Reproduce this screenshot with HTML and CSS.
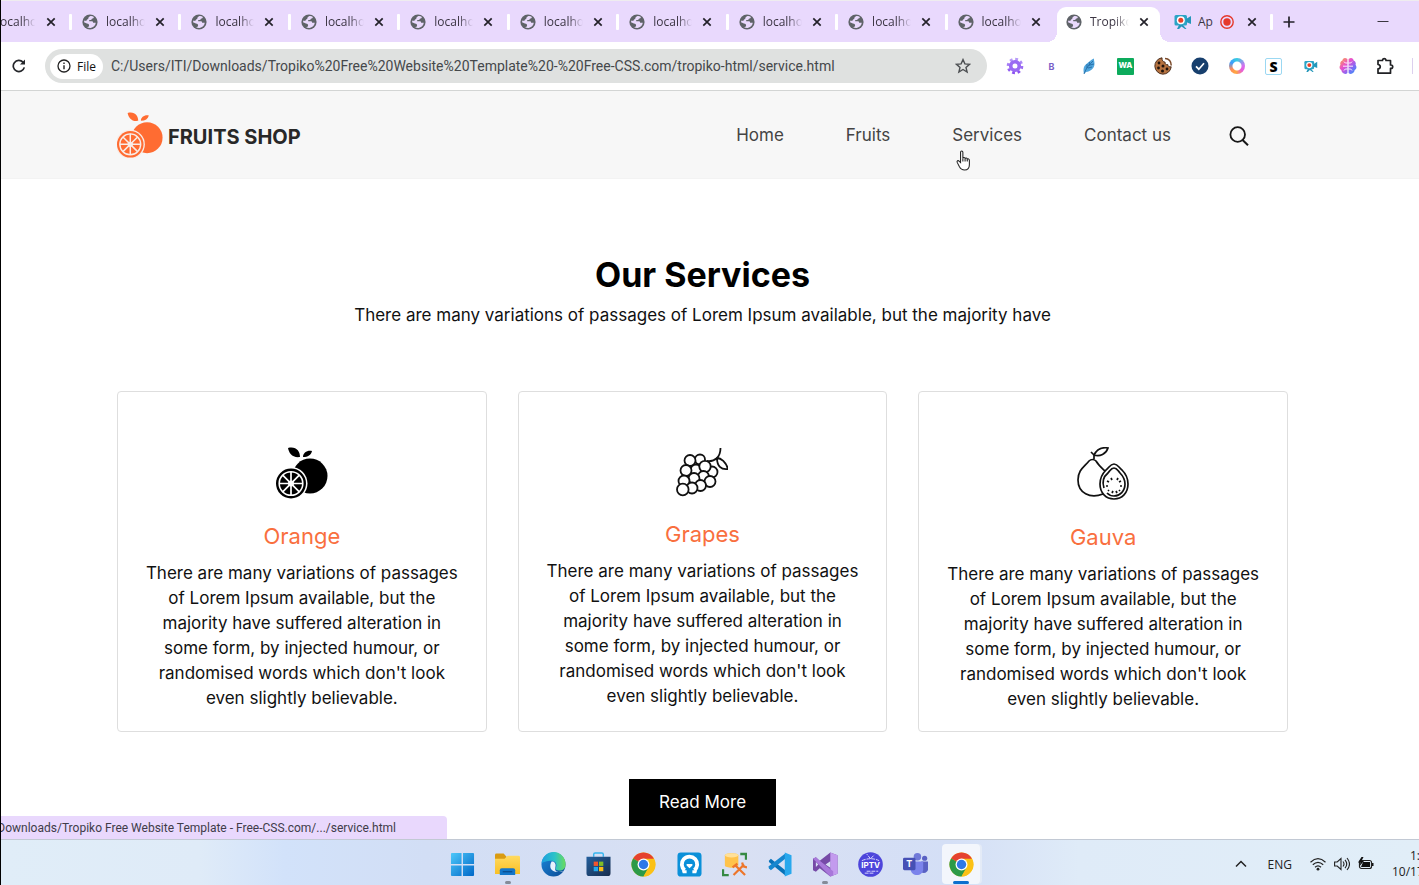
FILE: index.html
```
<!DOCTYPE html>
<html lang="en">
<head>
<meta charset="utf-8">
<title>Tropiko</title>
<link rel="stylesheet" href="styles.css">
</head>
<body>
<svg class="sprite" aria-hidden="true">
  <defs>
    <linearGradient id="g-win" x1="0" y1="0" x2="1" y2="1"><stop offset="0" stop-color="#4cc8fa"/><stop offset="1" stop-color="#0067c8"/></linearGradient>
    <linearGradient id="g-folder" x1="0" y1="0" x2="0" y2="1"><stop offset="0" stop-color="#ffda60"/><stop offset="1" stop-color="#f9bf24"/></linearGradient>
    <linearGradient id="g-edge" x1="0" y1="0" x2="1" y2="0"><stop offset="0" stop-color="#1d9ee0"/><stop offset=".55" stop-color="#2bc3c8"/><stop offset="1" stop-color="#6bdc5a"/></linearGradient>
    <linearGradient id="g-edge2" x1="0" y1="0" x2="1" y2="1"><stop offset="0" stop-color="#1b88dc"/><stop offset="1" stop-color="#0c4a93"/></linearGradient>
    <linearGradient id="g-store" x1="0" y1="0" x2="1" y2="1"><stop offset="0" stop-color="#235f9d"/><stop offset="1" stop-color="#182c4c"/></linearGradient>
    <linearGradient id="g-gear" x1="0" y1="0" x2="0" y2="1"><stop offset="0" stop-color="#b79af8"/><stop offset="1" stop-color="#8a4ff0"/></linearGradient>
    <linearGradient id="g-brain" x1="0" y1="0" x2="1" y2="1"><stop offset="0" stop-color="#ffab3d"/><stop offset=".4" stop-color="#e84fd0"/><stop offset=".7" stop-color="#7d6bf6"/><stop offset="1" stop-color="#2f9df5"/></linearGradient>
    <symbol id="globe" viewBox="0 0 16 16"><circle cx="8" cy="8" r="7.600" fill="#5f6368"/><path d="M8 2.200c1.500-.3 3 .1 3.900.9-.2 1-.9 1.500-2 1.600-.3 1-.9 1.400-2 1.400-.8 0-1 .6-.6 1.200h2.500c1 0 1.300.7 1.300 1.500h2.700c-.4 2.800-2.400 4.800-5.200 5.100-1.500.1-2.700-.2-3.700-.9 1.200-.2 2.200-.4 2.200-1.300 0-1.600-.7-2.200-2.200-2.300L2 8.200c.1-.6.200-1.200.5-1.700l1.800.4c.2-1.300.9-1.700 1.900-2C6.300 3.500 6.900 2.700 8 2.200z" fill="#e9d9fc"/></symbol>
    <symbol id="close" viewBox="0 0 10 10"><path d="M1.300 1.300l7.400 7.400M8.700 1.300L1.300 8.700" stroke="#24222a" stroke-width="1.700"/></symbol>
    <symbol id="recorder" viewBox="0 0 18 16"><rect x=".5" y="1" width="12.500" height="10.500" rx="1.500" fill="#2ba4c6"/><path d="M12 5l5-3v8l-5-2zM5 11h4l3.500 4h-1.500L7.500 12.500 5 15H3z" fill="#2497ba"/><circle cx="6.800" cy="6.200" r="4" fill="#fff"/><circle cx="6.800" cy="6.200" r="2.500" fill="#ea3f26"/></symbol>
    <symbol id="orange" viewBox="0 0 52 52"><path d="M24 10C16 11 13 6 12 1c8-2 12 3 12 9zM27 10c0-4 4-7 9-6-1 4-4 6-9 6z" fill="currentColor"/><circle cx="34" cy="29" r="17.500" fill="currentColor"/><circle cx="15" cy="36.500" r="16.500" fill="var(--gap)"/><circle cx="15" cy="36.500" r="15" fill="currentColor"/><circle cx="15" cy="36.500" r="11.800" fill="none" stroke="var(--gap)" stroke-width="1.600"/><path d="M15 24.700v23.600M3.200 36.500h23.600M6.700 28.200l16.600 16.600M23.300 28.200L6.700 44.800" stroke="var(--gap)" stroke-width="1.700"/><circle cx="15" cy="36.500" r="3" fill="var(--gap)"/></symbol>
    <symbol id="chrome" viewBox="0 0 26 26"><circle cx="13" cy="13" r="12.500" fill="#fbc116"/><path d="M13 13L2.200 6.700A12.500 12.500 0 0 1 23.800 6.700z" fill="#e5412f"/><path d="M2.200 6.700A12.500 12.500 0 0 0 13 25.500l5.400-9.400L13 13z" fill="#2c9a48"/><path d="M13 25.500A12.500 12.500 0 0 0 23.800 7H13v6l5.300 3z" fill="#fbc116"/><circle cx="13" cy="13" r="6.200" fill="#fff"/><circle cx="13" cy="13" r="4.900" fill="#2f78e8"/></symbol>
  </defs>
</svg>

<div class="screen">
  <header class="tabstrip">
    <div class="tab tab-cut"><span class="tab-title">ocalho</span><button class="x" aria-label="Close tab"><svg><use href="#close"/></svg></button></div>
    <div class="tab-group">
      <div class="tab"><svg class="fav"><use href="#globe"/></svg><span class="tab-title">localho</span><button class="x" aria-label="Close tab"><svg><use href="#close"/></svg></button></div>
      <div class="tab"><svg class="fav"><use href="#globe"/></svg><span class="tab-title">localho</span><button class="x" aria-label="Close tab"><svg><use href="#close"/></svg></button></div>
      <div class="tab"><svg class="fav"><use href="#globe"/></svg><span class="tab-title">localho</span><button class="x" aria-label="Close tab"><svg><use href="#close"/></svg></button></div>
      <div class="tab"><svg class="fav"><use href="#globe"/></svg><span class="tab-title">localho</span><button class="x" aria-label="Close tab"><svg><use href="#close"/></svg></button></div>
      <div class="tab"><svg class="fav"><use href="#globe"/></svg><span class="tab-title">localho</span><button class="x" aria-label="Close tab"><svg><use href="#close"/></svg></button></div>
      <div class="tab"><svg class="fav"><use href="#globe"/></svg><span class="tab-title">localho</span><button class="x" aria-label="Close tab"><svg><use href="#close"/></svg></button></div>
      <div class="tab"><svg class="fav"><use href="#globe"/></svg><span class="tab-title">localho</span><button class="x" aria-label="Close tab"><svg><use href="#close"/></svg></button></div>
      <div class="tab"><svg class="fav"><use href="#globe"/></svg><span class="tab-title">localho</span><button class="x" aria-label="Close tab"><svg><use href="#close"/></svg></button></div>
      <div class="tab tab-last"><svg class="fav"><use href="#globe"/></svg><span class="tab-title">localho</span><button class="x" aria-label="Close tab"><svg><use href="#close"/></svg></button></div>
    </div>
    <div class="tab tab-active"><svg class="fav"><use href="#globe"/></svg><span class="tab-title">Tropiko</span><button class="x" aria-label="Close tab"><svg><use href="#close"/></svg></button></div>
    <div class="tab tab-rec"><svg class="fav fav-rec"><use href="#recorder"/></svg><span class="tab-title">Ap</span><svg class="rec" viewBox="0 0 14 14"><circle cx="7" cy="7" r="6.200" fill="none" stroke="#e5392b" stroke-width="1.400"/><circle cx="7" cy="7" r="3.700" fill="#e5392b"/></svg><button class="x" aria-label="Close tab"><svg><use href="#close"/></svg></button></div>
    <button class="newtab" aria-label="New tab"><svg viewBox="0 0 12 12"><path d="M6 .5v11M.5 6h11" stroke="#24222a" stroke-width="1.700"/></svg></button>
    <button class="minimise" aria-label="Minimise"><svg viewBox="0 0 12 12"><path d="M.5 5.500h11" stroke="#3a3640"/></svg></button>
  </header>

  <div class="toolbar">
    <button class="reload" aria-label="Reload"><svg viewBox="0 0 14 14"><path d="M12.300 8.400A5.600 5.600 0 1 1 11 3.200l1.200 1.200" fill="none" stroke="#24262a" stroke-width="1.700"/><path d="M13 .6v5H8z" fill="#24262a"/></svg></button>
    <div class="omnibox">
      <button class="chip"><svg viewBox="0 0 14 14"><circle cx="7" cy="7" r="6" fill="none" stroke="#222" stroke-width="1.300"/><path d="M7 6.200v4M7 3.600v1.500" stroke="#222" stroke-width="1.400"/></svg>File</button>
      <input class="url" aria-label="Address" value="C:/Users/ITI/Downloads/Tropiko%20Free%20Website%20Template%20-%20Free-CSS.com/tropiko-html/service.html">
      <button class="star" aria-label="Bookmark"><svg viewBox="0 0 16 16"><path d="M8 1.600l1.900 4.300 4.600.4-3.500 3.100 1.100 4.600L8 11.500 3.900 14 5 9.400 1.500 6.300l4.600-.4z" fill="none" stroke="#4c4f52" stroke-width="1.400"/></svg></button>
    </div>
    <div class="extensions">
      <svg viewBox="0 0 18 18"><circle cx="9" cy="9" r="6.800" fill="none" stroke="url(#g-gear)" stroke-width="3" stroke-dasharray="2.700 2.640"/><circle cx="9" cy="9" r="4.300" fill="none" stroke="#9a6bf3" stroke-width="3.600"/></svg>
      <span class="ext-b">B</span>
      <svg viewBox="0 0 18 18"><path d="M4 17c-1-5-.5-8 3-10.500C9.500 4.500 11 2.500 14 1.500c-.3 2 .9 3.500.4 6.500-.8 4-4 6.500-8.400 7z" fill="#4fa5dc"/><path d="M4 17C6 11 9 8 13 4M7 11V7M9 9l.5-4M8 11l4-1M10 8l4-1" stroke="#1f659f" stroke-width=".8" fill="none"/></svg>
      <span class="ext-wa">WA</span>
      <svg viewBox="0 0 18 18"><path d="M8 .8a8.200 8.200 0 1 0 9.200 9c-2 .4-3.300-.5-3.400-2.200-2 .3-3-.7-2.700-2.400C9 5 7.800 3.200 8 .8z" fill="#b5723f" stroke="#4b2d1c"/><path d="M11 1.500c4 0 6.300 3 6.200 7" fill="none" stroke="#7b4a2a" stroke-width="1.500"/><g fill="#20130d"><circle cx="5" cy="6" r="1.400"/><circle cx="4.500" cy="11" r="1.400"/><circle cx="9" cy="9" r="1.500"/><circle cx="8.500" cy="14" r="1.500"/><circle cx="13" cy="12" r="1.400"/></g></svg>
      <svg viewBox="0 0 18 18"><circle cx="9" cy="9" r="8.500" fill="#173f6d"/><path d="M5 9.300l2.800 2.900L13 6.300" fill="none" stroke="#fff" stroke-width="1.700"/></svg>
      <span class="ext-ring"></span>
      <span class="ext-s">S</span>
      <svg class="ext-rec"><use href="#recorder"/></svg>
      <svg viewBox="0 0 18 18"><path d="M8.400 2C6 0 3.600 1.300 3.400 3.400 1.300 4.300.8 6.300 1.500 7.800-.2 10 .6 12.300 2.300 13.100 2.500 16.500 6.500 18 8.400 16zM9.600 2c2.400-2 4.800-.7 5 1.400 2.100.9 2.600 2.900 1.900 4.400 1.700 2.200.9 4.500-.8 5.300-.2 3.400-4.200 4.900-6.100 2.900z" fill="url(#g-brain)"/><path d="M8.500 6H6.300L5 4.600M8.500 9.200H4M8.500 12H6.300L5 13.500M9.500 6h2.200L13 4.600M9.500 9.200H14M9.500 12h2.200l1.300 1.500" stroke="#fff" stroke-width=".9" fill="none"/></svg>
      <svg viewBox="0 0 18 18"><path d="M2 3.500h4.500V3a1.800 1.800 0 0 1 3.500 0v.5h4.500V8h.5a1.700 1.700 0 0 1 0 3.400h-.5v4.800H2v-4.300c3-.4 3-4 0-4.400z" fill="none" stroke="#202124" stroke-width="1.700" stroke-linejoin="round"/></svg>
      <span class="divider"></span>
    </div>
  </div>

  <div class="page">
    <div class="site-header">
      <a class="brand" href="#"><svg><use href="#orange"/></svg><span>FRUITS SHOP</span></a>
      <nav class="nav"><a href="#">Home</a><a href="#">Fruits</a><a href="#" class="hovered">Services<svg class="cursor" viewBox="0 0 14 20"><path d="M4.200 12V2.200c0-1.700 2.200-1.700 2.200 0V8c.3-1.200 2-1 2.100.3.400-1 2-.8 2.100.5.600-.8 2-.4 2 .9V14c0 3-1.600 5-4.600 5-2.700 0-3.900-1.300-5-3.300L1 11.800c-.6-1.400.8-2.200 1.800-1.200z" fill="#fff" stroke="#222" stroke-width="1"/><path d="M6.400 8v3M8.500 8.500v2.500M10.600 9v2" stroke="#222"/></svg></a><a href="#">Contact us</a></nav>
      <button class="search" aria-label="Search"><svg viewBox="0 0 20 20"><circle cx="8.700" cy="8.500" r="7.300" fill="none" stroke="#161616" stroke-width="1.800"/><path d="M13.600 14l5.400 5.300" stroke="#161616" stroke-width="2"/></svg></button>
    </div>

    <main class="services">
      <h1>Our Services</h1>
      <p class="lead">There are many variations of passages of Lorem Ipsum available, but the majority have</p>
      <div class="cards">
        <article class="card">
          <svg class="fruit fruit-orange"><use href="#orange"/></svg>
          <h2>Orange</h2>
          <p>There are many variations of passages<br>of Lorem Ipsum available, but the<br>majority have suffered alteration in<br>some form, by injected humour, or<br>randomised words which don't look<br>even slightly believable.</p>
        </article>
        <article class="card">
          <svg class="fruit fruit-grapes" viewBox="0 0 52 50"><g fill="#fff" stroke="#111" stroke-width="1.800"><circle cx="24" cy="12.500" r="5"/><circle cx="14" cy="13.500" r="5.500"/><circle cx="36" cy="25" r="5.500"/><circle cx="20" cy="23" r="5.500"/><circle cx="29" cy="19.500" r="5.700"/><circle cx="10" cy="23.500" r="5.500"/><circle cx="27.500" cy="29.500" r="5.500"/><circle cx="34" cy="34.500" r="5.500"/><circle cx="18" cy="31.500" r="5.500"/><circle cx="8" cy="34" r="5.500"/><circle cx="24.500" cy="38.500" r="5.500"/><circle cx="16" cy="41" r="5.500"/><circle cx="6.800" cy="42.500" r="5.800"/></g><path d="M31 14c8 1 13.500-4 13.500-13M41 11c4 0 9 4 11 11-7 1-11-3-11-11z" fill="none" stroke="#111" stroke-width="1.800"/></svg>
          <h2>Grapes</h2>
          <p>There are many variations of passages<br>of Lorem Ipsum available, but the<br>majority have suffered alteration in<br>some form, by injected humour, or<br>randomised words which don't look<br>even slightly believable.</p>
        </article>
        <article class="card">
          <svg class="fruit fruit-guava" viewBox="0 0 52 53"><g fill="none" stroke="#111" stroke-width="1.700"><path d="M26 47C13 52 1 46 1 33c0-10 6-13 11-19 2-2 5-2 7 0 3 5 7 8 10 11M17 12V8l-3-3M17 8c3-6 8-8 14-7-2 6-8 9-14 7z"/><path d="M37 17c4 0 5 4 8 6 4 4 6 8 6 14 0 9-6 15-14 15s-14-6-14-15c0-6 2-10 6-14 3-2 4-6 8-6z" fill="#fff"/><path d="M37 21c3 0 4 3 6 5 3 3 5 6 5 11 0 7-5 12-11 12-3 0-5-1-7-3M27 41c-2-6-1-11 4-15 2-2 3-5 6-5"/><path d="M34 31l1 2M41 31l-1 2M30 34l2 1M44 34l-2 1M29 39h2M45 39h-2M31 44l1-1M43 44l-1-1M35 46l1-2M40 46l-1-2"/></g></svg>
          <h2>Gauva</h2>
          <p>There are many variations of passages<br>of Lorem Ipsum available, but the<br>majority have suffered alteration in<br>some form, by injected humour, or<br>randomised words which don't look<br>even slightly believable.</p>
        </article>
      </div>
      <a class="more" href="#">Read More</a>
    </main>
    <div class="status"><span>Downloads/Tropiko Free Website Template - Free-CSS.com/.../service.html</span></div>
  </div>

  <footer class="taskbar">
    <div class="apps">
      <button aria-label="Start"><svg viewBox="0 0 26 26"><path d="M1 2a1 1 0 0 1 1-1h10v11.500H1zM13.500 1H24a1 1 0 0 1 1 1v10.500H13.500zM1 14h11v11H2a1 1 0 0 1-1-1zM13.500 14H25v10a1 1 0 0 1-1 1H13.500z" fill="url(#g-win)"/></svg></button>
      <button class="open" aria-label="Files"><svg viewBox="0 0 26 26"><path d="M0 3a1.500 1.500 0 0 1 1.500-1.500H9L12 5v5H0z" fill="#d99b12"/><path d="M0 7h10l3-3h11.500A1.500 1.500 0 0 1 26 5.500V23H0z" fill="url(#g-folder)"/><path d="M5 24v-5a2 2 0 0 1 2-2h12a2 2 0 0 1 2 2v5z" fill="#1376c9"/><path d="M8 20.500h10" stroke="#0b4f91" stroke-width="1.400"/></svg></button>
      <button aria-label="Edge"><svg viewBox="0 0 26 26"><circle cx="13" cy="13" r="12.500" fill="url(#g-edge2)"/><path d="M.6 12A12.400 12.400 0 0 1 25.500 13c0 5-4 7-8 6-3-.6-2.800-2-2-3.200 1.500-3-.5-6.800-4.500-6.800-5 0-9.400 1.500-10.400 3z" fill="url(#g-edge)"/><path d="M11 10c-4 7 1 14 13 9.500-3 2-11 2.500-9-4 1-3-1-6-4-5.500z" fill="#e7f2fc"/></svg></button>
      <button aria-label="Store"><svg viewBox="0 0 26 26"><path d="M8 5V2.500A1.500 1.500 0 0 1 9.500 1h7A1.500 1.500 0 0 1 18 2.500V5" fill="none" stroke="#35b5ee" stroke-width="1.500"/><path d="M.5 5h25v17a3 3 0 0 1-3 3h-19a3 3 0 0 1-3-3z" fill="url(#g-store)"/><path d="M8 10h4.500v4.500H8z" fill="#f2542d"/><path d="M13.500 10H18v4.500h-4.500z" fill="#82bd25"/><path d="M8 15.500h4.500V20H8z" fill="#23a7ec"/><path d="M13.500 15.500H18V20h-4.500z" fill="#fcbb17"/></svg></button>
      <button aria-label="Chrome"><svg><use href="#chrome"/></svg></button>
      <button aria-label="Driver tool"><svg viewBox="0 0 26 26"><rect x=".5" y=".5" width="25" height="25" rx="3.500" fill="#0b90d9"/><path d="M8 19A8 8 0 1 1 18 19" fill="none" stroke="#fff" stroke-width="4"/><path d="M5 19h5v3H6zM16 19h5l-1 3h-4z" fill="#fff"/><path d="M10 12.500h6v1.500l-3 3-3-3z" fill="#fff"/></svg></button>
      <button aria-label="Database tools"><svg viewBox="0 0 26 26"><path d="M3 3.500c0-3 14-3 14 0V14c0 3-14 3-14 0z" fill="#ffc34b"/><ellipse cx="10" cy="3.500" rx="7" ry="2.200" fill="#ffe099"/><path d="M19 2h6v6M1 18v6h6" fill="none" stroke="#368a43" stroke-width="2.500"/><path d="M12 24l11-11M14 14l10 10" stroke="#ed762b" stroke-width="2.300"/><path d="M11 16l5-4M21 11l1 4 4 1" fill="none" stroke="#ed762b" stroke-width="2.300"/></svg></button>
      <button aria-label="Code"><svg viewBox="0 0 26 26"><path d="M2 9L4 7l15 12v5.500L2 10.500z" fill="#0872b8"/><path d="M2 17l2 2L19 7V1.500L1.500 15z" fill="#1687cf"/><path d="M18.500.5l7 3v19l-7 3z" fill="#28a8ed"/></svg></button>
      <button class="open" aria-label="Visual Studio"><svg viewBox="0 0 26 26"><path d="M0 7l3-1.500 4 3.500 11-8.500 7.500 3v19l-7.500 3L7 17l-4 3.500L0 19z" fill="#764aa7"/><path d="M18 .5l7.500 3v19l-7.500 3z" fill="#c39bee"/><path d="M7 9L3 5.500 0 7l18 18.500 3-1V20z" fill="#a878da"/><path d="M3 10.500v5L5.500 13zM18 9.500v7L13 13z" fill="#d7e0f4"/></svg></button>
      <button class="iptv" aria-label="IPTV"><svg viewBox="0 0 26 26"><circle cx="13" cy="13" r="12.800" fill="#4d45db"/><path d="M4 9q9-4 18 0M13 7L9 2M13 7l4-4M9 20h12M7 22h9" stroke="#dcd9ff" fill="none" stroke-dasharray="4 1"/></svg><span>IPTV</span></button>
      <button class="teams" aria-label="Teams"><svg viewBox="0 0 26 26"><circle cx="15" cy="5" r="3.900" fill="#7079d8"/><circle cx="22.500" cy="6.500" r="2.700" fill="#5961c3"/><path d="M19 10h7v8c0 3-4 5-7 3z" fill="#5961c3"/><path d="M8 10h13v8c0 8-13 8-13 0z" fill="#7b83eb"/><rect y="6" width="13" height="13" rx="1.500" fill="#4650b5"/></svg><span>T</span></button>
      <button class="current" aria-label="Chrome, active"><svg><use href="#chrome"/></svg></button>
    </div>
    <div class="tray">
      <svg class="caret" viewBox="0 0 12 12"><path d="M1 8.500l5-5 5 5" fill="none" stroke="#222" stroke-width="1.500"/></svg>
      <span class="lang">ENG</span>
      <svg viewBox="0 0 16 16"><g fill="none" stroke="#222" stroke-width="1.200"><path d="M.5 6.200q7.500-7 15 0M2.800 8.800q5.200-5 10.400 0M5 11.200q3-2.800 6 0"/></g><circle cx="8" cy="13.200" r="1.400" fill="#222"/></svg>
      <svg viewBox="0 0 16 16"><path d="M.6 6h2.600L7 2.500v11L3.200 10H.6zM9 5.500q2 2.500 0 5M11 3.800q3.500 4.200 0 8.400M13 2q5 6 0 12" fill="none" stroke="#222" stroke-width="1.100"/></svg>
      <svg viewBox="0 0 16 16"><rect x="1.500" y="4.500" width="12" height="8" rx="2" fill="none" stroke="#222" stroke-width="1.200"/><path d="M5 6h7v5H3zM14 7h1.500v3H14z" fill="#111"/><path d="M3.500 1L0 6.500h2.500L1.500 10 6 5H3.500l2-4z" fill="#111"/></svg>
      <div class="clock"><span class="time">1:</span><span>10/17</span></div>
    </div>
  </footer>
</div>
</body>
</html>
```
FILE: styles.css
```
* { box-sizing: border-box; }
body { margin: 0; font-family: Inter, sans-serif; color: #111; }
button { border: 0; padding: 0; background: none; font: inherit; color: inherit; display: flex; align-items: center; justify-content: center; }
a { color: inherit; text-decoration: none; }
svg { display: block; flex: none; }
.sprite { position: absolute; width: 0; height: 0; }
.screen { height: 100vh; min-height: 600px; display: flex; flex-direction: column; border-left: 1px solid #000; overflow: hidden; }

.tabstrip { display: flex; flex: none; height: 42px; background: #e9d9fd; border-top: 1px solid #efecef; font: 12px "Open Sans", sans-serif; color: #3b3543; }
.tab { position: relative; display: flex; align-items: center; padding-left: 10px; min-width: 0; }
.tab-group { display: grid; grid-template-columns: repeat(9, 1fr); flex: 0 1 985px; }
.tab-cut { flex: 0 0 71px; padding-left: 0; }
.fav { width: 16px; height: 16px; }
.fav-rec { width: 18px; }
.tab-title { width: 41px; margin-left: 8px; overflow: hidden; white-space: nowrap; -webkit-mask-image: linear-gradient(90deg, #000 60%, transparent 95%); mask-image: linear-gradient(90deg, #000 60%, transparent 95%); }
.tab-cut .tab-title { width: 37px; margin-left: -1px; }
.tab-rec .tab-title { width: 17px; margin-left: 6px; -webkit-mask-image: none; mask-image: none; }
.x { width: 10px; height: 16px; margin-left: 8px; }
.tab-cut .x { margin-left: 9px; }
.x svg { width: 10px; height: 10px; }
.tab-group .tab::after, .tab-cut::after, .tab-rec::after { content: ""; position: absolute; right: 0; top: 13px; width: 3px; height: 16px; background: #fff; border-radius: 1px; }
.tab-group .tab-last::after { display: none; }
.tab-active { flex: 0 0 103px; margin-top: 6px; padding-left: 9px; padding-bottom: 6px; background: #fff; border-radius: 9px 9px 0 0; }
.tab-active::before, .tab-active::after { content: ""; position: absolute; bottom: 0; width: 10px; height: 10px; }
.tab-active::before { right: 100%; background: radial-gradient(circle at 0 0, transparent 10px, #fff 10px); }
.tab-active::after { left: 100%; background: radial-gradient(circle at 100% 0, transparent 10px, #fff 10px); }
.tab-rec { flex: 0 0 113px; padding-left: 14px; }
.rec { width: 14px; height: 14px; margin-left: 5px; }
.tab-rec .x { margin-left: 13px; }
.newtab { width: 32px; }
.newtab svg, .minimise svg { width: 12px; height: 12px; }
.minimise { width: 46px; margin-left: auto; margin-right: 13px; }

.toolbar { display: flex; flex: none; align-items: center; height: 49px; background: #fff; border-bottom: 1px solid #d3d5d4; }
.reload { width: 36px; height: 34px; }
.reload svg { width: 14px; height: 14px; }
.omnibox { display: flex; align-items: center; flex: 1; min-width: 0; height: 34px; margin-left: 8px; padding: 0 16px 0 5px; border-radius: 17px; background: #dfe1e0; }
.chip { width: 53px; height: 25px; gap: 6px; border-radius: 13px; background: #fff; font: 12px "Open Sans", sans-serif; }
.chip svg { width: 14px; height: 14px; }
.url { flex: 1; min-width: 0; margin-left: 7px; padding: 0 1px; border: 0; outline: 0; background: none; color: #45484b; font: 14px Roboto, sans-serif; }
.star svg { width: 16px; height: 16px; }
.extensions { display: grid; grid-template-columns: repeat(11, 37px) 10px; align-items: center; justify-items: center; padding: 0 6px 0 9px; }
.extensions svg { width: 18px; height: 18px; }
.extensions .ext-rec { width: 14px; height: 13px; }
.ext-b { color: #7a5fc8; font: bold 9px Inter, sans-serif; }
.ext-wa { width: 17px; height: 17px; background: #0dab5c; color: #fff; font: 800 8px/15px Inter, sans-serif; text-align: center; border-radius: 1px; }
.ext-ring { width: 16px; height: 16px; border-radius: 50%; background: radial-gradient(circle, #fff 4px, transparent 5px), conic-gradient(#35cfe0, #d86ef0 90deg, #e85bdc 130deg, #ffa83d 190deg, #ff8c5a 240deg, #3d9bff 300deg, #35cfe0); }
.ext-s { width: 17px; height: 17px; border: 1px solid #9bd8f2; border-radius: 2px; font: 800 14px/15px "Open Sans", sans-serif; text-align: center; color: #000; }
.divider { width: 1px; height: 16px; justify-self: end; background: #dcd0ee; }

.page { position: relative; flex: 1; min-height: 0; overflow: hidden; background: #fff; }
.site-header { display: flex; align-items: center; height: 88px; padding: 0 170px 0 116px; background: #f7f7f7; border-bottom: 1px solid #f3f3f3; }
.brand { display: flex; align-items: center; gap: 5px; font-size: 20px; font-weight: 700; color: #282828; }
.brand svg { width: 46px; height: 46px; color: #ff6c32; --gap: #f9ede8; }
.brand span { padding-top: 4px; }
.nav { display: flex; gap: 62px; margin-left: auto; font-size: 17px; color: #444; }
.hovered { position: relative; }
.cursor { position: absolute; left: 4px; top: 25px; width: 15px; height: 21px; }
.search { margin-left: 58px; padding-top: 2px; }
.search svg { width: 20px; height: 20px; }

.services { display: flex; flex-direction: column; align-items: center; padding: 74px 131px 0 116px; text-align: center; }
h1 { margin: 0; font-size: 34px; line-height: 44px; font-weight: 700; color: #000; }
.lead { margin: 6px 0 0; font-size: 17px; line-height: 25px; }
.cards { display: grid; grid-template-columns: repeat(3, 1fr); gap: 31px; width: 100%; margin-top: 63px; }
.card { display: flex; flex-direction: column; align-items: center; padding: 55px 0 19px; border: 1px solid #dedede; border-radius: 4px; }
.fruit { width: 52px; height: 52px; }
.fruit-orange { color: #000; --gap: #fff; }
.fruit-grapes { height: 50px; }
.fruit-guava { height: 53px; }
.card h2 { margin: 22px 0 0; font-size: 22px; line-height: 30px; font-weight: 400; color: #f96f3e; }
.card p { margin: 10px 0 0; font-size: 17px; line-height: 25px; white-space: nowrap; }
.more { margin-top: 47px; padding: 0 30px; background: #000; color: #fff; font-size: 17px; line-height: 47px; }
.status { position: absolute; left: 0; bottom: 0; display: flex; justify-content: flex-end; width: 446px; height: 23px; padding-right: 51px; overflow: hidden; border-radius: 0 4px 0 0; background: #e9d8fd; color: #403c49; font: 12px/24px Roboto, sans-serif; white-space: nowrap; }

.taskbar { display: grid; grid-template-columns: minmax(0, 1fr) 544px minmax(0, 1fr); flex: none; height: 46px; border-top: 1px solid #c2c9d4; background: linear-gradient(90deg, #e0edf8 0, #dfebf8 14%, #d2e2fa 20%, #d2def5 30%, #d9e0f3 52%, #d4dff6 67%, #dfebf8 76%, #e1eef8 100%); }
.apps { grid-column: 2; display: grid; grid-template-columns: repeat(12, 1fr); margin-left: 2px; margin-right: -2px; }
.apps button { position: relative; height: 100%; padding-top: 4px; }
.apps svg { width: 25px; height: 25px; }
.open::after, .current::after { content: ""; position: absolute; bottom: 1px; width: 6px; height: 3px; border-radius: 2px; background: #858b98; }
.current::after { width: 16px; background: #0b6fce; }
.current::before { content: ""; position: absolute; z-index: -1; top: 4px; bottom: 1px; left: 3px; right: 4px; border-radius: 4px; background: #f3f6fc; box-shadow: 2px 0 #e4ebf7; }
.current { isolation: isolate; }
.iptv span { position: absolute; top: 17px; color: #fff; font: bold 8px/16px Inter, sans-serif; }
.teams span { position: absolute; left: 13px; top: 17px; color: #fff; font: bold 9px/14px Inter, sans-serif; }
.tray { grid-column: 3; display: flex; align-items: center; justify-content: flex-end; gap: 8px; padding-top: 3px; font: 12px "Open Sans", sans-serif; color: #222; }
.tray svg { width: 16px; height: 16px; }
.tray .caret { width: 12px; height: 12px; margin-right: 13px; }
.lang { margin-right: 10px; }
.clock { display: flex; flex-direction: column; width: 27px; margin-left: 10px; overflow: hidden; line-height: 16px; }
.time { padding-left: 18px; }
```
